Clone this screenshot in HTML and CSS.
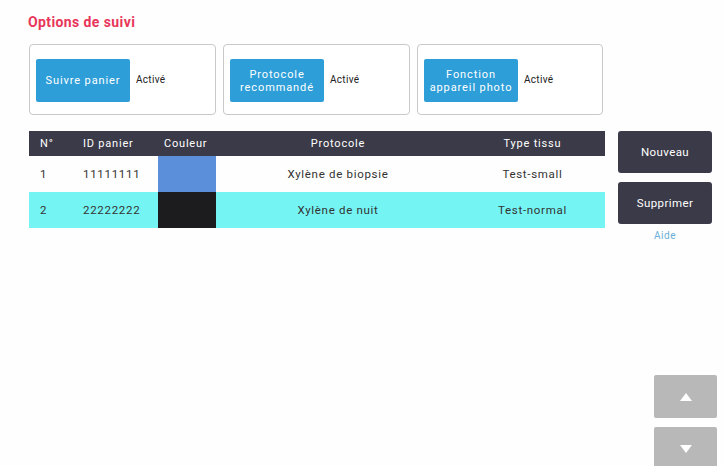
FILE: index.html
```html
<!DOCTYPE html>
<html lang="fr">
<head>
<meta charset="utf-8">
<link rel="stylesheet" href="styles.css">
</head>
<body>
<div class="page">
  <main class="main">
    <h1 class="title">Options de suivi</h1>
    <div class="cards">
      <div class="card"><button class="opt">Suivre panier</button><span class="state">Activé</span></div>
      <div class="card"><button class="opt">Protocole recommandé</button><span class="state">Activé</span></div>
      <div class="card"><button class="opt">Fonction appareil photo</button><span class="state">Activé</span></div>
    </div>
    <table class="grid">
      <thead>
        <tr><th class="c-n">N°</th><th class="c-id">ID panier</th><th class="c-col">Couleur</th><th class="c-pr">Protocole</th><th class="c-ty">Type tissu</th></tr>
      </thead>
      <tbody>
        <tr><td class="c-n">1</td><td class="c-id">11111111</td><td class="c-col"><div class="sw sw-blue"></div></td><td class="c-pr">Xylène de biopsie</td><td class="c-ty">Test-small</td></tr>
        <tr class="sel"><td class="c-n">2</td><td class="c-id">22222222</td><td class="c-col"><div class="sw sw-black"></div></td><td class="c-pr">Xylène de nuit</td><td class="c-ty">Test-normal</td></tr>
      </tbody>
    </table>
  </main>
  <aside class="side">
    <button class="act">Nouveau</button>
    <button class="act">Supprimer</button>
    <span class="help">Aide</span>
    <div class="arrows">
      <button class="arr"><svg width="12" height="8" viewBox="0 0 12 8"><path d="M6 0L12 8H0Z" fill="#fff"/></svg></button>
      <button class="arr"><svg width="12" height="8" viewBox="0 0 12 8"><path d="M0 0H12L6 8Z" fill="#fff"/></svg></button>
    </div>
  </aside>
</div>
</body>
</html>
```
FILE: styles.css
```css
* { box-sizing: border-box; }
html, body { margin: 0; padding: 0; background: #fefefe; }
body { font-family: Roboto, "Liberation Sans", sans-serif; color: #333; width: 723px; height: 466px; overflow: hidden; }
.page { display: flex; height: 466px; padding-left: 28px; }
.main { width: 576px; display: flex; flex-direction: column; }
.title { margin: 14px 0 0; font-size: 14px; font-weight: 700; color: #e8365a; line-height: 16px; height: 16px; letter-spacing: 0.4px; }
.cards { display: flex; gap: 7px; margin-top: 14px; margin-left: 1px; }
.card { width: 187px; height: 71px; border: 1.5px solid #c9c9c9; border-radius: 4px; display: flex; align-items: center; padding-left: 6px; background: #fff; }
.card:last-child { width: 186px; }
.opt { width: 94px; height: 43px; background: #2d9ed8; color: #fff; border: none; border-radius: 2px; font-family: inherit; font-size: 11px; letter-spacing: 0.9px; line-height: 13px; padding: 0 2px; margin-top: 2px; }
.state { font-size: 10px; letter-spacing: 0.3px; color: #222; margin-left: 6px; }
.grid { margin-top: 16px; width: 576px; border-collapse: collapse; margin-left: 1px; }
.grid th { background: #3b3a48; color: #fff; font-weight: 400; font-size: 11px; letter-spacing: 0.8px; height: 25px; padding: 0; text-align: left; }
.grid td { height: 36px; font-size: 11.5px; letter-spacing: 0.7px; padding: 0; color: #333; }
.c-n { width: 43px; padding-left: 11px !important; }
.c-id { width: 86px; padding-left: 11px !important; }
.c-col { width: 58px; }
th.c-col { padding-left: 6px !important; }
.grid .c-pr { width: 244px; text-align: center; }
.grid .c-ty { text-align: center; }
.sw { width: 58px; height: 36px; }
.sw-blue { background: #5b8fd9; }
.sw-black { background: #1c1c1e; }
.sel td { background: #74f5f4; }
.side { width: 99px; margin-left: 14px; display: flex; flex-direction: column; padding-top: 131px; }
.act { width: 94px; height: 42px; background: #3b3a48; color: #fff; border: none; border-radius: 3px; font-family: inherit; font-size: 11.5px; letter-spacing: 0.4px; margin-bottom: 9px; }
.help { width: 94px; text-align: center; font-size: 10px; letter-spacing: 0.5px; color: #6aaed8; margin-top: -3px; }
.arrows { margin-top: auto; display: flex; flex-direction: column; gap: 9px; align-self: flex-end; margin-bottom: -4px; }
.arr { width: 63px; height: 43px; background: #b8b8b8; border: none; border-radius: 2px; display: flex; align-items: center; justify-content: center; padding: 0; }
```
